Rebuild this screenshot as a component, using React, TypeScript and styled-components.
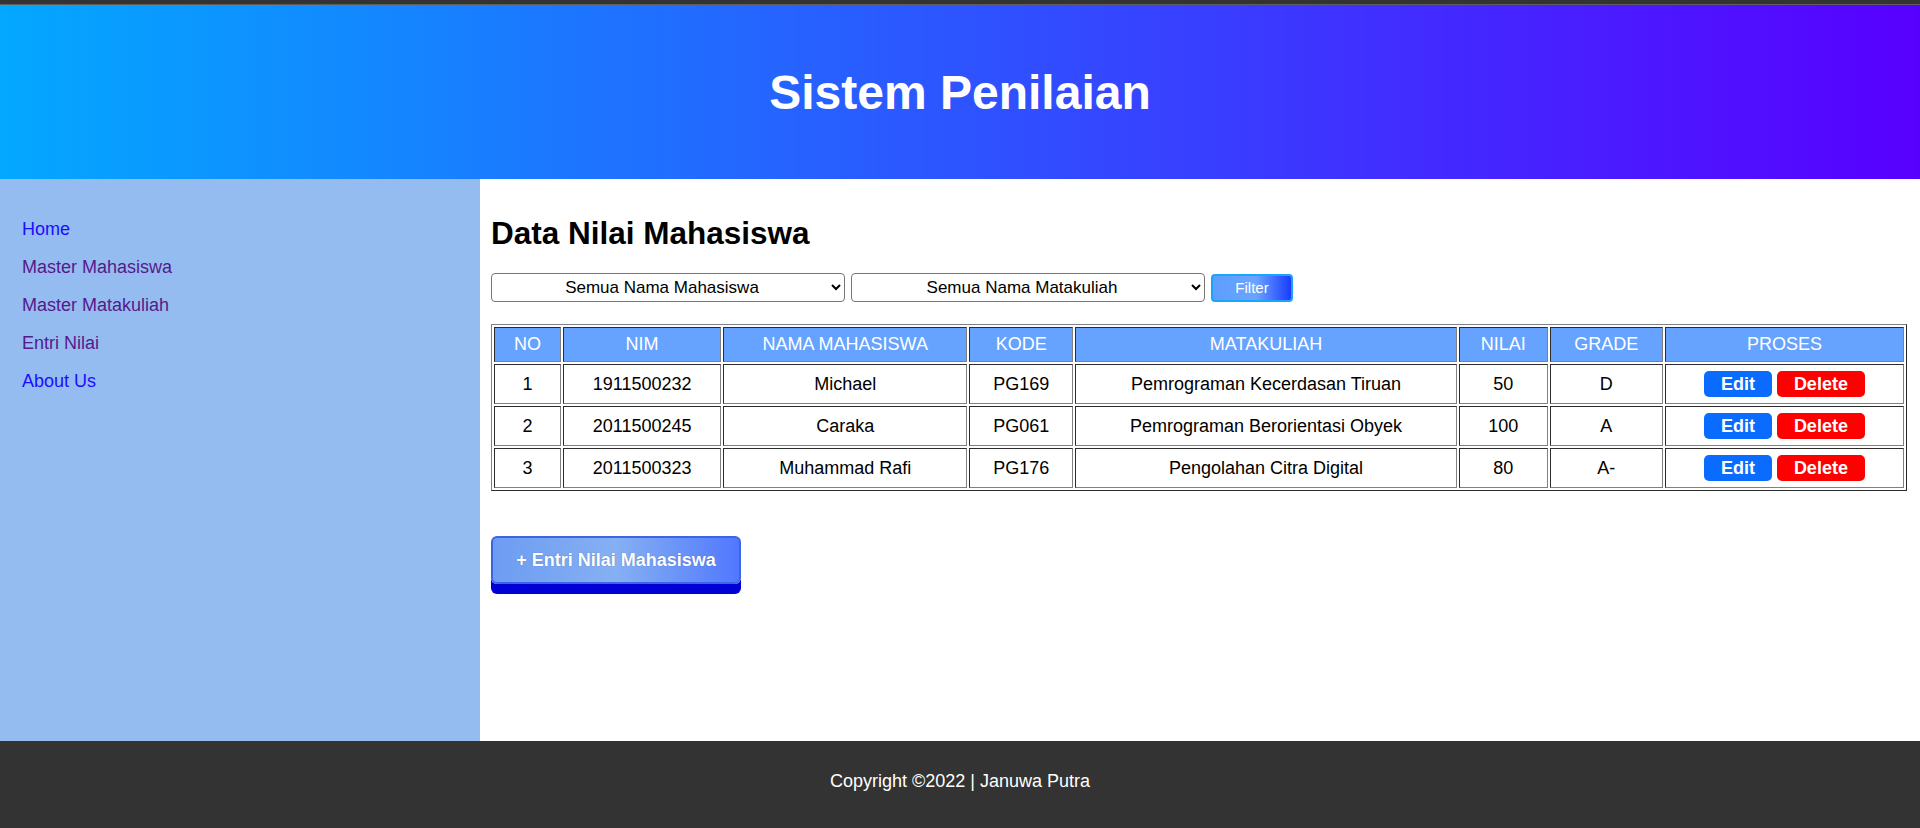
import React from 'react';
import styled, { createGlobalStyle } from 'styled-components';

const GlobalStyle = createGlobalStyle`
  html, body {
    margin: 0;
    padding: 0;
  }
  body {
    font-family: "Liberation Sans", Arial, sans-serif;
    font-size: 18px;
    color: #000;
    background: #fff;
  }
`;

const TopBar = styled.div`
  height: 4px;
  background: #333;
  border-bottom: 1px solid #5e5e5e;
`;

const Header = styled.header`
  height: 174px;
  display: flex;
  align-items: center;
  justify-content: center;
  background: linear-gradient(to right, #03a8ff, #5800ff);
`;

const HeaderTitle = styled.h1`
  margin: 0;
  color: #fff;
  font-size: 48px;
  font-weight: bold;
`;

const Layout = styled.div`
  display: grid;
  grid-template-columns: 480px 1fr;
  min-height: 562px;
`;

const Sidebar = styled.nav`
  background: #95bcf0;
  padding: 40px 22px 0;
`;

const NavList = styled.ul`
  list-style: none;
  margin: 0;
  padding: 0;
  display: flex;
  flex-direction: column;
  gap: 17px;
`;

const NavLink = styled.a<{ $visited?: boolean }>`
  color: ${(p) => (p.$visited ? '#551a8b' : '#1a0dff')};
  text-decoration: none;
  font-size: 18px;
`;

const Main = styled.main`
  padding: 15px 13px 0 11px;
`;

const PageTitle = styled.h1`
  font-size: 31.5px;
  font-weight: bold;
  margin: 21px 0 21px;
`;

const FilterRow = styled.form`
  display: flex;
  gap: 6px;
  align-items: center;
`;

const Select = styled.select`
  width: 354px;
  height: 29px;
  border: 1px solid #767676;
  border-radius: 4px;
  background: #fff;
  font-family: "Liberation Sans", Arial, sans-serif;
  font-size: 17px;
  text-align: center;
  text-align-last: center;
  color: #000;
`;

const FilterButton = styled.button`
  width: 82px;
  height: 28px;
  border: 2px solid #1aa4ff;
  border-radius: 4px;
  background: linear-gradient(to right, #5e9eff, #6aa4ff 55%, #1a3cff);
  color: #fff;
  font-family: "Liberation Sans", Arial, sans-serif;
  font-size: 15px;
`;

const Table = styled.table`
  width: 100%;
  margin-top: 22px;
  table-layout: fixed;
  border: 1px outset #808080;
  border-spacing: 2px;
`;

const Th = styled.th<{ $w: number }>`
  width: ${(p) => p.$w}px;
  box-sizing: border-box;
  background: #66a3ff;
  color: #fff;
  font-weight: normal;
  font-size: 18px;
  border: 1px inset #808080;
  padding: 6px 4px;
`;

const Td = styled.td`
  border: 1px inset #808080;
  padding: 6px 4px;
  text-align: center;
  font-size: 18px;
`;

const Actions = styled.div`
  display: flex;
  justify-content: center;
  gap: 5px;
`;

const ActionButton = styled.a<{ $variant: 'edit' | 'delete' }>`
  display: inline-block;
  height: 26px;
  line-height: 26px;
  padding: 0 17px;
  border-radius: 5px;
  background: ${(p) => (p.$variant === 'edit' ? '#0a6cff' : '#ff0000')};
  color: #fff;
  font-weight: bold;
  font-size: 18px;
  text-decoration: none;
`;

const AddButton = styled.a`
  display: inline-flex;
  align-items: center;
  justify-content: center;
  box-sizing: border-box;
  margin-top: 45px;
  width: 250px;
  height: 48px;
  border: 2px solid #3d63e6;
  border-radius: 6px;
  background: linear-gradient(to right, #6d9cf2, #86b0f2 50%, #5078ff);
  box-shadow: 0 10px 0 #0000d6;
  color: #fff;
  font-weight: bold;
  font-size: 18px;
  white-space: nowrap;
  text-decoration: none;
  text-shadow: 0 0 1px rgba(0, 0, 80, 0.4);
`;

const Footer = styled.footer`
  height: 87px;
  box-sizing: border-box;
  padding-bottom: 6px;
  background: #333;
  color: #fff;
  display: flex;
  align-items: center;
  justify-content: center;
  font-size: 18px;
`;

const columns = [
  { label: 'NO', w: 67 },
  { label: 'NIM', w: 158 },
  { label: 'NAMA MAHASISWA', w: 244 },
  { label: 'KODE', w: 104 },
  { label: 'MATAKULIAH', w: 381 },
  { label: 'NILAI', w: 89 },
  { label: 'GRADE', w: 113 },
  { label: 'PROSES', w: 239 },
];

const rows = [
  { nim: '1911500232', nama: 'Michael', kode: 'PG169', mk: 'Pemrograman Kecerdasan Tiruan', nilai: 50, grade: 'D' },
  { nim: '2011500245', nama: 'Caraka', kode: 'PG061', mk: 'Pemrograman Berorientasi Obyek', nilai: 100, grade: 'A' },
  { nim: '2011500323', nama: 'Muhammad Rafi', kode: 'PG176', mk: 'Pengolahan Citra Digital', nilai: 80, grade: 'A-' },
];

const menu = [
  { label: 'Home', visited: false },
  { label: 'Master Mahasiswa', visited: true },
  { label: 'Master Matakuliah', visited: true },
  { label: 'Entri Nilai', visited: true },
  { label: 'About Us', visited: false },
];

const App = () => (
  <>
    <GlobalStyle />
    <TopBar />
    <Header>
      <HeaderTitle>Sistem Penilaian</HeaderTitle>
    </Header>
    <Layout>
      <Sidebar>
        <NavList>
          {menu.map((m) => (
            <li key={m.label}>
              <NavLink href="#" $visited={m.visited}>{m.label}</NavLink>
            </li>
          ))}
        </NavList>
      </Sidebar>
      <Main>
        <PageTitle>Data Nilai Mahasiswa</PageTitle>
        <FilterRow onSubmit={(e) => e.preventDefault()}>
          <Select defaultValue="">
            <option value="">Semua Nama Mahasiswa</option>
          </Select>
          <Select defaultValue="">
            <option value="">Semua Nama Matakuliah</option>
          </Select>
          <FilterButton type="submit">Filter</FilterButton>
        </FilterRow>
        <Table>
          <thead>
            <tr>
              {columns.map((c) => (
                <Th key={c.label} $w={c.w}>{c.label}</Th>
              ))}
            </tr>
          </thead>
          <tbody>
            {rows.map((r, i) => (
              <tr key={r.nim}>
                <Td>{i + 1}</Td>
                <Td>{r.nim}</Td>
                <Td>{r.nama}</Td>
                <Td>{r.kode}</Td>
                <Td>{r.mk}</Td>
                <Td>{r.nilai}</Td>
                <Td>{r.grade}</Td>
                <Td>
                  <Actions>
                    <ActionButton href="#" $variant="edit">Edit</ActionButton>
                    <ActionButton href="#" $variant="delete">Delete</ActionButton>
                  </Actions>
                </Td>
              </tr>
            ))}
          </tbody>
        </Table>
        <AddButton href="#">+ Entri Nilai Mahasiswa</AddButton>
      </Main>
    </Layout>
    <Footer>Copyright ©2022 | Januwa Putra</Footer>
  </>
);

export default App;
